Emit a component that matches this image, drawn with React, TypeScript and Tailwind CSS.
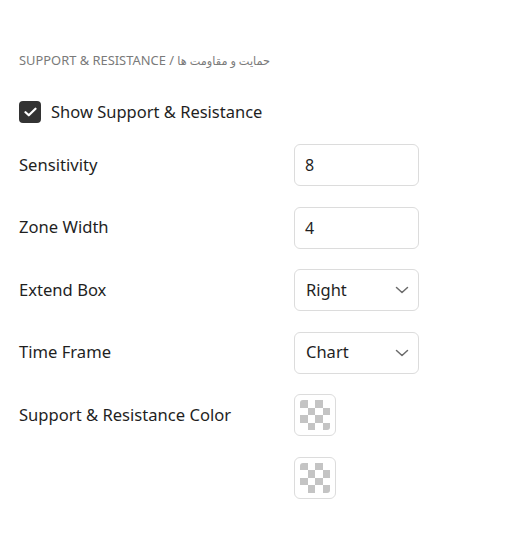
import React from "react";

const font = { fontFamily: '"Noto Sans", "DejaVu Sans", sans-serif' };

function Checker() {
  // 4x4 شطرنجی
  const cells = [];
  for (let r = 0; r < 4; r++) {
    for (let c = 0; c < 4; c++) {
      const on = (r + c) % 2 === 0;
      cells.push(
        <div
          key={`${r}-${c}`}
          className={on ? "bg-[#c4c4c4]" : "bg-white"}
        />
      );
    }
  }
  return (
    <div className="grid h-[30px] w-[30px] grid-cols-4 grid-rows-4 overflow-hidden rounded-[3px]">
      {cells}
    </div>
  );
}

function Swatch() {
  return (
    <button className="flex h-[42px] w-[42px] items-center justify-center rounded-[6px] border border-[#dcdcdc] bg-white">
      <Checker />
    </button>
  );
}

function NumberInput({ value }: { value: string }) {
  return (
    <div className="flex h-[42px] w-[125px] items-center rounded-[6px] border border-[#dcdcdc] bg-white px-[10px] text-[16px] text-[#1f1f1f]">
      {value}
    </div>
  );
}

function Select({ value }: { value: string }) {
  return (
    <div className="flex h-[42px] w-[125px] items-center justify-between rounded-[6px] border border-[#dcdcdc] bg-white pl-[11px] pr-[9px] text-[16.5px] text-[#1f1f1f]">
      <span>{value}</span>
      <svg width="14" height="8" viewBox="0 0 14 8" fill="none">
        <path d="M1.5 1.5 7 6.5l5.5-5" stroke="#6b6b6b" strokeWidth="1.5" strokeLinecap="round" strokeLinejoin="round" />
      </svg>
    </div>
  );
}

export default function App() {
  return (
    <div className="min-h-screen bg-white px-[19px] pt-[51px]" style={font}>
      <div className="text-[12.9px] leading-[18px] text-[#7a7a7a]">
        SUPPORT &amp; RESISTANCE / <span dir="rtl" className="text-[11.3px]">حمایت و مقاومت ها</span>
      </div>

      <label className="mt-[31px] flex items-center gap-[10px]">
        <span className="flex h-[22px] w-[22px] items-center justify-center rounded-[4px] bg-[#333333]">
          <svg width="13" height="10" viewBox="0 0 13 10" fill="none">
            <path d="M1.5 5.2 4.8 8.3 11.5 1.7" stroke="white" strokeWidth="2.2" strokeLinecap="round" strokeLinejoin="round" />
          </svg>
        </span>
        <span className="text-[16.5px] leading-[22px] text-[#1f1f1f]">Show Support &amp; Resistance</span>
      </label>

      <div className="mt-[21px] grid grid-cols-[275px_125px] gap-y-[20.6px] text-[16.6px] text-[#1f1f1f]">
        <div className="flex h-[42px] items-center">Sensitivity</div>
        <NumberInput value="8" />

        <div className="flex h-[42px] items-center">Zone Width</div>
        <NumberInput value="4" />

        <div className="flex h-[42px] items-center">Extend Box</div>
        <Select value="Right" />

        <div className="flex h-[42px] items-center">Time Frame</div>
        <Select value="Chart" />

        <div className="flex h-[42px] items-center">Support &amp; Resistance Color</div>
        <Swatch />

        <div />
        <Swatch />
      </div>
    </div>
  );
}
